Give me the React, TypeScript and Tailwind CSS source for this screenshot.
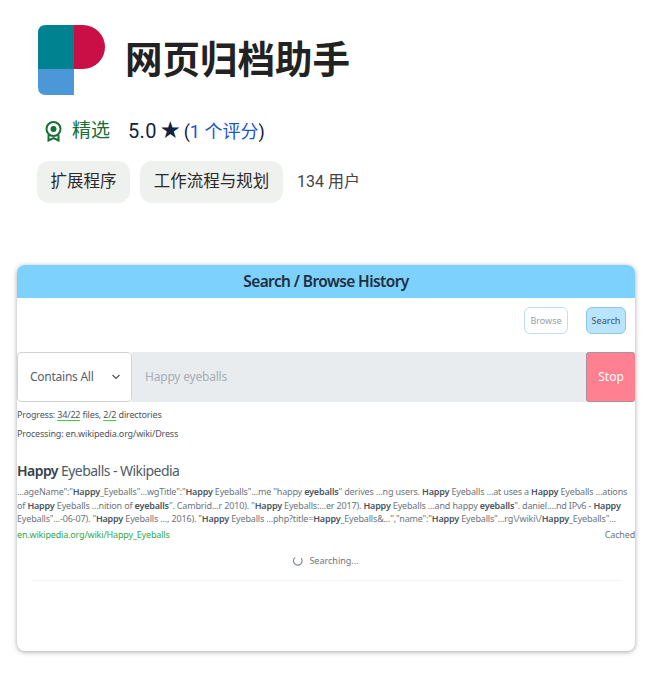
import React from "react";

const cjk = { fontFamily: '"Roboto","Noto Sans CJK SC",sans-serif' };

function Logo() {
  return (
    <svg width="68" height="70" viewBox="0 0 68 70" className="shrink-0">
      <path d="M36 0H8Q0 0 0 8V44H36Z" fill="#008291" />
      <path d="M36 0H45A22 22 0 0 1 45 44H36Z" fill="#c90f46" />
      <path d="M0 44H36V70H8Q0 70 0 62Z" fill="#4b97d8" />
    </svg>
  );
}

function Badge() {
  return (
    <svg width="17" height="21" viewBox="0 0 17 21" fill="none" stroke="#186e36" strokeWidth="2" className="shrink-0">
      <circle cx="8.5" cy="8" r="7" />
      <circle cx="8.5" cy="8" r="3" fill="#186e36" stroke="none" />
      <path d="M3.5 14V19.5L8.5 17L13.5 19.5V14" />
    </svg>
  );
}

function H({ children }: { children: React.ReactNode }) {
  return <b className="font-semibold text-[#4a5560]">{children}</b>;
}

export default function App() {
  return (
    <div className="w-[660px] h-[673px] bg-white overflow-hidden" style={{ fontFamily: '"Noto Sans",sans-serif' }}>
      <div className="pl-[37px] pt-[25px]" style={cjk}>
        <div className="flex items-center pl-px">
          <Logo />
          <h1 className="ml-[19px] text-[37.5px] leading-[70px] font-bold text-[#222222]">网页归档助手</h1>
        </div>
        <div className="flex items-center mt-[20px] h-[32px] pl-[8px] text-[19px] text-[#10233f]">
          <Badge />
          <span className="ml-[10px] text-[#186e36]">精选</span>
          <span className="ml-[18px] text-[20px] tracking-[0.3px]">5.0</span>
          <span className="ml-[4px] text-[19px]">★</span>
          <span className="ml-[4px] text-[18px]">(<span className="text-[#1a56c4]">1 个评分</span>)</span>
        </div>
        <div className="flex items-center mt-[14px] text-[16.5px] text-[#2a2a2a]">
          <span className="h-[42px] w-[93px] flex items-center justify-center rounded-[12px] bg-[#eff1ef]">扩展程序</span>
          <span className="ml-[10px] h-[42px] w-[143px] flex items-center justify-center rounded-[12px] bg-[#eff1ef]">工作流程与规划</span>
          <span className="ml-[14px] text-[16px] text-[#444444]">134 用户</span>
        </div>
      </div>

      <div className="mt-[62px] mx-[17px] w-[618px] h-[386px] rounded-[8px] bg-white shadow-[0_1px_5px_rgba(0,0,0,0.35)] overflow-hidden flex flex-col">
        <div className="h-[33px] shrink-0 bg-[#7dd1fd] flex items-center justify-center text-[15.5px] font-semibold tracking-[-0.6px] text-[#1f2f3d]">
          Search / Browse History
        </div>
        <div className="flex justify-end gap-[18px] pt-[9px] pr-[9px] h-[54px] shrink-0">
          <button className="w-[44px] h-[27px] rounded-[6px] border border-[#bfdfec] text-[9px] text-[#9aa0a5] bg-white">Browse</button>
          <button className="w-[40px] h-[27px] rounded-[6px] border border-[#8ec5e0] text-[9px] font-medium text-[#4b6475] bg-[#b9e4fd]">Search</button>
        </div>
        <div className="flex h-[50px] shrink-0 text-[12px]">
          <div className="w-[115px] shrink-0 flex items-center justify-between pl-[12px] pr-[10px] border border-[#d0d4d8] rounded-[4px] text-[#566270] bg-white">
            <span className="tracking-[-0.25px]">Contains All</span>
            <svg width="10" height="6" viewBox="0 0 10 6" fill="none" stroke="#4a5560" strokeWidth="1.2"><path d="M1.5 1L5 4.5L8.5 1" /></svg>
          </div>
          <div className="flex-1 bg-[#e9ecef] flex items-center pl-[13px] text-[#a6adb4] tracking-[-0.2px]">Happy eyeballs</div>
          <div className="w-[49px] shrink-0 bg-[#ff8090] border border-[#a9909c] border-r-0 rounded-[3px] flex items-center justify-center text-white">Stop</div>
        </div>
        <div className="text-[9px] leading-[12px] text-[#4a5560] mt-[7px] tracking-[-0.17px]">
          Progress: <span className="underline decoration-[#44d044] underline-offset-2">34/22</span> files, <span className="underline decoration-[#44d044] underline-offset-2">2/2</span> directories
        </div>
        <div className="text-[9px] leading-[12px] text-[#4a5560] mt-[7px] tracking-[-0.17px]">Processing: en.wikipedia.org/wiki/Dress</div>
        <div className="text-[14px] leading-[20px] text-[#4f5b67] mt-[21px] tracking-[-0.55px]">
          <b className="font-semibold text-[#35404c]">Happy</b> Eyeballs - Wikipedia
        </div>
        <div className="text-[9px] leading-[13.6px] text-[#6c757d] mt-[4px] whitespace-nowrap tracking-[-0.17px]">
          <div>...ageName":"<H>Happy</H>_Eyeballs"...wgTitle":"<H>Happy</H> Eyeballs"...me "happy <H>eyeballs</H>" derives ...ng users. <H>Happy</H> Eyeballs ...at uses a <H>Happy</H> Eyeballs ...ations</div>
          <div>of <H>Happy</H> Eyeballs ...nition of <H>eyeballs</H>". Cambrid...r 2010). "<H>Happy</H> Eyeballs:...er 2017). <H>Happy</H> Eyeballs ...and happy <H>eyeballs</H>". daniel....nd IPv6 - <H>Happy</H></div>
          <div>Eyeballs"...-06-07). "<H>Happy</H> Eyeballs ..., 2016). "<H>Happy</H> Eyeballs ...php?title=<H>Happy</H>_Eyeballs&amp;...","name":"<H>Happy</H> Eyeballs"...rg\/wiki\/<H>Happy</H>_Eyeballs"...</div>
        </div>
        <div className="flex justify-between text-[9px] leading-[12px] mt-[3px] tracking-[-0.17px]">
          <span className="text-[#2fa84f]">en.wikipedia.org/wiki/Happy_Eyeballs</span>
          <span className="text-[#6c757d]">Cached</span>
        </div>
        <div className="flex items-center justify-center gap-[6px] text-[9px] leading-[12px] text-[#6c757d] mt-[14px]">
          <svg width="10" height="10" viewBox="0 0 10 10" fill="none" stroke="#7d868e" strokeWidth="1.1"><path d="M2.2 1.4A4.3 4.3 0 1 0 8.2 2.2" /></svg>
          <span>Searching...</span>
        </div>
        <div className="mx-[14px] mt-[13px] border-t border-[#f3f4f5]" />
      </div>
    </div>
  );
}
